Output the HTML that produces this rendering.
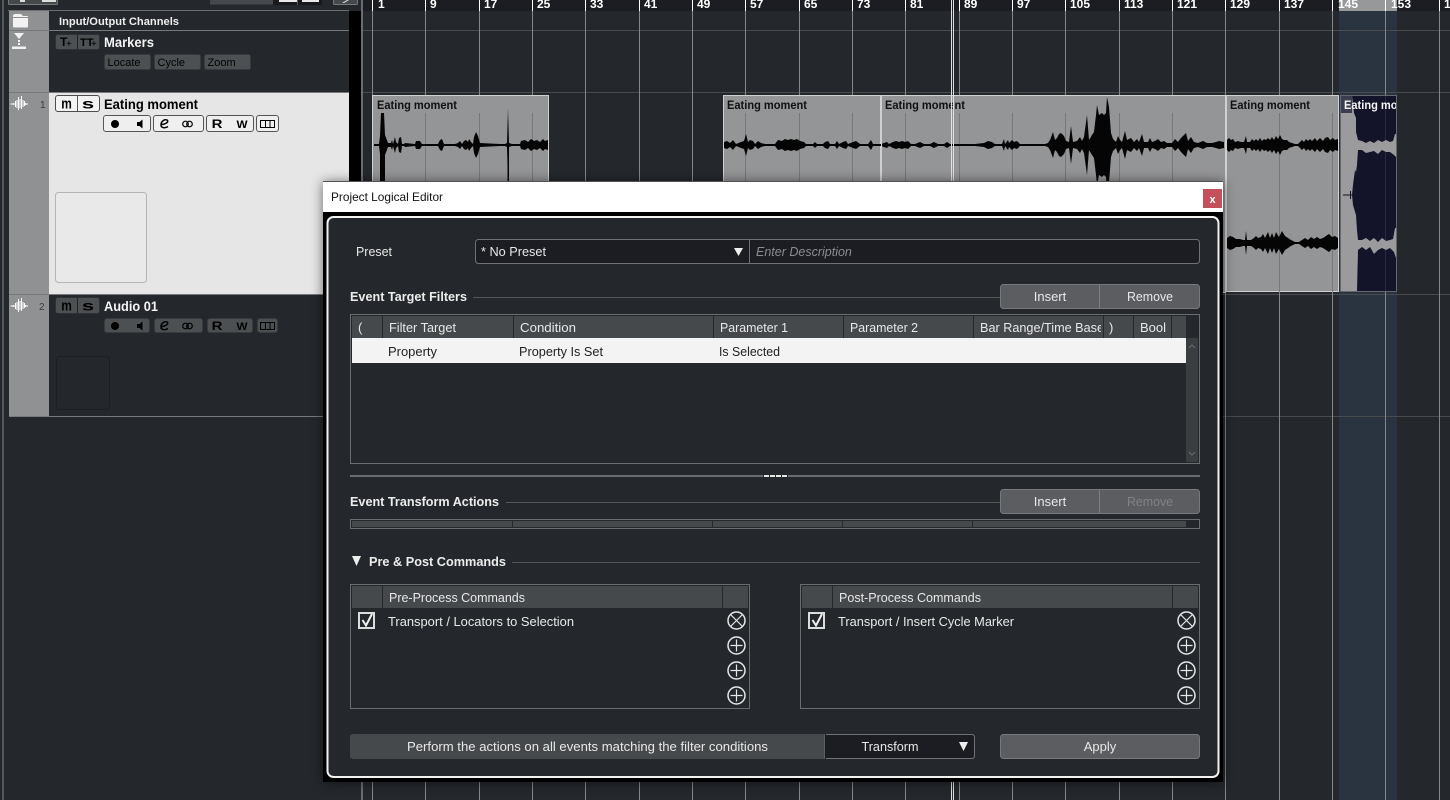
<!DOCTYPE html>
<html><head><meta charset="utf-8"><title>Project Logical Editor</title>
<style>
html,body{margin:0;padding:0;background:#24282c;overflow:hidden}
svg{display:block}
text{font-family:"Liberation Sans",sans-serif;font-size:13px;fill:#e8e8e8;white-space:pre}
.b{font-weight:bold}
.r{font-weight:bold;font-size:12px;fill:#fff}
.h{font-weight:bold;font-size:13px;fill:#ececec}
.c{font-weight:bold;font-size:11.5px;fill:#111}
.tn{font-weight:bold;font-size:14px}
.sm{font-size:11px;fill:#000}
.m{text-anchor:middle}
.ic{font-weight:bold;font-size:12px;text-anchor:middle;fill:#000}
</style></head>
<body>
<svg width="1450" height="800" viewBox="0 0 1450 800" xmlns="http://www.w3.org/2000/svg">
<defs>
<filter id="sh" x="-10%" y="-10%" width="120%" height="120%"><feGaussianBlur stdDeviation="6"/></filter>
<clipPath id="c1"><rect x="373" y="96" width="175" height="195"/></clipPath>
<clipPath id="c2"><rect x="724" y="96" width="157" height="195"/></clipPath>
<clipPath id="c3"><rect x="882" y="96" width="343" height="195"/></clipPath>
<clipPath id="c5"><rect x="1341" y="96" width="55" height="195"/></clipPath>
<clipPath id="th"><rect x="975" y="316" width="126" height="22"/></clipPath>
<path id="w1" d="M374 0V-1L379-1 380-9 381-32 384-32 385-10 388-2 391-2 392-5 393-1 395-8 396-3 398-1 399-7 401-8 402-1 404-1 405-2 415-1 416-4 420-4 422-1 438-1 440-5 442-6 444-1 455-1 458-2 460-4 462-1 464-4 466-5 468-3 469-6 471-3 473-1 474-8 476-13 478-9 480-2 500-1 505-1 507-2 508-37 509-2 512-1 520-1 521-4 525-5 528-3 531-6 534-4 537-5 540-3 543-6 545-4 548-5V0Z"/>
<path id="w2" d="M724 0V-3L727-4 730-2 733-5 736-1 741-3 744-4 746-11 748-3 750-5 753-4 755-1 758-4 761-2 765-1 775-1 778-5 782-4 785-6 788-5 791-6 794-5 797-6 800-4 804-3 806-1 813-1 815-3 817-1 823-1 825-3 828-4 830-1 835-1 837-4 839-1 843-3 846-4 848-1 853-3 856-4 860-1 868-1 871-5 873-1 880-1 881-1 884-2 887-3 889-1 893-3 896-4 899-3 902-4 905-3 908-4 911-1 915-1 920-3 924-1 930-1 934-3 938-1 944-1 947-3 950-1 953-1 955-1 975-1 984-2 988-4 992-3 995-1 1002-1 1004-6 1005-1 1008-5 1009-2 1012-5 1014-3 1017-4 1020-1 1030-1 1045-1 1048-2 1050-5 1053-13 1055-5 1057-7 1059-11 1061-12 1064-9 1066-4 1069-3 1071-19 1073-3 1077-4 1080-8 1082-4 1084-8 1087-30 1089-5 1092-10 1094-13 1096-30 1097-40 1099-30 1102-32 1104-30 1106-32 1107-48 1109-38 1111-12 1113-6 1116-3 1118-9 1120-5 1122-3 1125-14 1127-5 1131-7 1134-3 1137-6 1139-3 1142-11 1144-3 1148-3 1150-7 1152-3 1155-4 1158-6 1161-3 1164-4 1167-2 1172-2 1175-6 1178-3 1181-7 1186-12 1188-4 1191-8 1194-3 1198-2 1203-4 1207-2 1212-2 1216-3 1219-4 1224-3V0Z"/>
<path id="w4" d="M1227 0V-5L1229-7 1231-5 1233-6 1235-3 1238-4 1241-3 1244-3 1246-9 1247-3 1250-3 1252-6 1254-4 1256-6 1258-4 1260-7 1262-4 1264-6 1266-5 1268-7 1270-5 1272-8 1274-5 1276-9 1278-6 1280-10 1282-6 1284-5 1287-5 1289-3 1292-2 1295-1 1298-1 1300-3 1302-5 1304-3 1306-6 1308-4 1310-6 1312-4 1315-7 1317-4 1320-7 1323-4 1325-7 1328-8 1330-5 1333-7 1335-5 1338-6V0Z"/>
<path id="w4b" d="M1227 0V-5L1230-7 1233-6 1236-4 1240-4 1243-3 1245-3 1246-12 1247-3 1251-3 1254-5 1256-7 1258-5 1261-6 1263-9 1265-5 1268-11 1270-5 1272-10 1274-5 1276-11 1279-6 1282-12 1285-7 1288-5 1291-3 1295-1 1299-1 1302-3 1305-5 1308-3 1311-6 1314-4 1317-6 1320-4 1323-5 1326-7 1329-9 1332-6 1335-7 1338-5V0Z"/>
</defs>

<rect width="1450" height="800" fill="#24282c"/>
<rect x="2" y="0" width="2" height="800" fill="#55585b"/>
<rect x="8" y="10" width="341" height="1" fill="#6c6e70"/>
<path d="M8.500 0V3.500Q8.500 4.500 9.500 4.500H56.500Q57.500 4.500 57.500 3.500V0" fill="#46494c" stroke="#77797b"/>
<rect x="20" y="0" width="5" height="2" fill="#ddd"/><rect x="42" y="0" width="14" height="2" fill="#ddd"/>
<path d="M210 0H322V4.500H210Z" fill="#46494c"/>
<rect x="273" y="0" width="49" height="5" fill="#17191c"/>
<rect x="279" y="0" width="18" height="2" fill="#e8e8e8"/><rect x="302" y="0" width="17" height="2" fill="#e8e8e8"/>
<rect x="297" y="0" width="1" height="5" fill="#55585b"/>
<path d="M333.500 0V3.500Q333.500 4.500 334.500 4.500H356.500Q357.500 4.500 357.500 3.500V0" fill="#46494c" stroke="#77797b"/>
<path d="M342 3L347 0H349L344 3Z" fill="#ddd"/>

<rect x="9" y="11" width="40" height="405" fill="#8f9193"/>
<rect x="49" y="11" width="300" height="81" fill="#24282c"/>
<rect x="349" y="11" width="12" height="405" fill="#000"/>
<rect x="9" y="30" width="340" height="1" fill="#77797b"/>
<rect x="9" y="92" width="340" height="1" fill="#77797b"/>
<rect x="49" y="93" width="300" height="201" fill="#e6e6e6"/>
<rect x="9" y="294" width="340" height="1" fill="#77797b"/>
<rect x="49" y="295" width="300" height="121" fill="#24282c"/>
<rect x="9" y="416" width="315" height="1" fill="#77797b"/>
<rect x="349" y="294" width="12" height="123" fill="#000"/>

<path d="M13 16Q13 14 15 14H21L23 16H27Q28 16 28 17V26Q28 27.500 27 27.500H14Q13 27.500 13 26Z" fill="#f2f2f2"/>
<rect x="13" y="17" width="15" height="1" fill="#8f9193"/>
<text x="59" y="25" class="b" style="font-size:11px;fill:#eee" textLength="120" lengthAdjust="spacingAndGlyphs">Input/Output Channels</text>

<path d="M14 33H24L19 39Z" fill="#f2f2f2"/>
<rect x="18" y="40" width="2" height="2" fill="#f2f2f2"/><rect x="18" y="43" width="2" height="2" fill="#f2f2f2"/>
<rect x="12" y="46.500" width="14" height="2.500" fill="#f2f2f2"/>
<rect x="55.500" y="34.500" width="44" height="15" rx="2" fill="#4d5053" stroke="#2f3235"/>
<rect x="77" y="35" width="1" height="14" fill="#222"/>
<text x="60" y="46" style="font-size:12px;font-weight:bold;fill:#000">T</text><text x="66" y="47" style="font-size:10px;fill:#000">+</text>
<text x="80" y="46" style="font-size:11px;font-weight:bold;fill:#000">TT</text><text x="91" y="47" style="font-size:10px;fill:#000">+</text>
<text x="104" y="47" class="tn" style="fill:#f4f4f4" textLength="50" lengthAdjust="spacingAndGlyphs">Markers</text>
<rect x="104.500" y="54.500" width="46" height="15" rx="2" fill="#4d5053" stroke="#373a3d"/>
<rect x="154.500" y="54.500" width="46" height="15" rx="2" fill="#4d5053" stroke="#373a3d"/>
<rect x="204.500" y="54.500" width="46" height="15" rx="2" fill="#4d5053" stroke="#373a3d"/>
<text x="107.500" y="66" class="sm">Locate</text>
<text x="157.500" y="66" class="sm">Cycle</text>
<text x="207.500" y="66" class="sm">Zoom</text>

<path d="M10.500 104H14M14 103V105M15.500 101V107M17 100V108M18.500 97V110M20 99V108M21.500 96V109M23 100V107M24.500 101V106M25.500 103V105M26 104H28" stroke="#fff" stroke-width="1" fill="none"/>
<path d="M10.500 306H14M14 305V307M15.500 303V309M17 302V310M18.500 299V312M20 301V310M21.500 298V311M23 302V309M24.500 303V308M25.500 305V307M26 306H28" stroke="#fff" stroke-width="1" fill="none"/>
<text x="40" y="108" style="font-size:10px;fill:#3a3a3a">1</text>
<text x="39" y="310" style="font-size:10px;fill:#3a3a3a">2</text>

<rect x="55.500" y="95.500" width="44" height="16" rx="2.500" fill="#f3f3f3" stroke="#4a4c4e"/>
<rect x="77" y="96" width="1" height="15" fill="#555"/>
<text class="ic" transform="translate(66.500,108.500) scale(.85,1.050)" style="font-size:14px">m</text>
<text class="ic" transform="translate(88,108.500) scale(1.600,1)" style="font-size:14px">s</text>
<text x="104" y="109" class="tn" style="fill:#000" textLength="94" lengthAdjust="spacingAndGlyphs">Eating moment</text>
<g fill="#efefef" stroke="#555"><rect x="103.500" y="115.500" width="47" height="16" rx="2.500"/><rect x="153.500" y="115.500" width="50" height="16" rx="2.500"/><rect x="206.500" y="115.500" width="47" height="16" rx="2.500"/><rect x="256.500" y="115.500" width="22" height="16" rx="2.500"/></g>
<circle cx="115" cy="124" r="4" fill="#000"/>
<path d="M137 122H139.500L142.500 119.500V128.500L139.500 126H137Z" fill="#000"/>
<path d="M161 124.500C165 124.500 168.500 122.500 167.500 120.500 166 118.500 161 120.500 161 125 161 128 165 128.500 168 126.500" fill="none" stroke="#000" stroke-width="1.500"/>
<circle cx="185.500" cy="124" r="2.800" fill="none" stroke="#000" stroke-width="1.200"/><circle cx="189.500" cy="124" r="2.800" fill="none" stroke="#000" stroke-width="1.200"/>
<text class="ic" transform="translate(217,128) scale(1.150,.9)" style="font-size:13px">R</text>
<text class="ic" transform="translate(242,128) scale(.9,.85)" style="font-size:13px">W</text>
<path d="M260.500 120.500H274.500V127.500H260.500ZM265.500 120.500V127.500M270 120.500V127.500" fill="none" stroke="#000"/>
<rect x="55.500" y="192.500" width="91" height="90" rx="3" fill="#e9e9e9" stroke="#b4b4b4"/>

<rect x="55.500" y="297.500" width="44" height="16" rx="2.500" fill="#4d5053" stroke="#2f3235"/>
<rect x="77" y="298" width="1" height="15" fill="#222"/>
<text class="ic" transform="translate(66.500,310.500) scale(.85,1.050)" style="font-size:14px">m</text>
<text class="ic" transform="translate(88,310.500) scale(1.600,1)" style="font-size:14px">s</text>
<text x="104" y="311" class="tn" style="fill:#f5f5f5" textLength="54" lengthAdjust="spacingAndGlyphs">Audio 01</text>
<g fill="#4d5053" stroke="#383b3e"><rect x="104.500" y="318.500" width="45" height="14" rx="2.500"/><rect x="154.500" y="318.500" width="48" height="14" rx="2.500"/><rect x="207.500" y="318.500" width="45" height="14" rx="2.500"/><rect x="257.500" y="318.500" width="20" height="14" rx="2.500"/></g>
<circle cx="115" cy="326" r="4" fill="#000"/>
<path d="M137 324H139.500L142.500 321.500V330.500L139.500 328H137Z" fill="#000"/>
<path d="M161 326.500C165 326.500 168.500 324.500 167.500 322.500 166 320.500 161 322.500 161 327 161 330 165 330.500 168 328.500" fill="none" stroke="#000" stroke-width="1.500"/>
<circle cx="185.500" cy="326" r="2.800" fill="none" stroke="#000" stroke-width="1.200"/><circle cx="189.500" cy="326" r="2.800" fill="none" stroke="#000" stroke-width="1.200"/>
<text class="ic" transform="translate(217,330) scale(1.150,.9)" style="font-size:13px">R</text>
<text class="ic" transform="translate(242,330) scale(.9,.85)" style="font-size:13px">W</text>
<path d="M260.500 322.500H274.500V329.500H260.500ZM265.500 322.500V329.500M270 322.500V329.500" fill="none" stroke="#000"/>
<rect x="56.500" y="356.500" width="53" height="53" rx="3" fill="#24282c" stroke="#1c1f22"/>

<rect x="361" y="0" width="2" height="800" fill="#6a6d70"/>
<rect x="363" y="0" width="1087" height="11" fill="#1b1d22"/>
<rect x="1339" y="0" width="58" height="11" fill="#97989a"/>
<rect x="1339" y="11" width="58" height="789" fill="#2a3340"/>
<rect x="363" y="30" width="1087" height="1" fill="#474b4e"/>
<rect x="363" y="92" width="1087" height="1" fill="#474b4e"/>
<rect x="363" y="294" width="1087" height="1" fill="#474b4e"/>
<rect x="363" y="416" width="1087" height="1" fill="#474b4e"/>
<g fill="#85888a">
<rect x="372" y="0" width="1" height="800"/><rect x="425" y="0" width="1" height="800"/><rect x="479" y="0" width="1" height="800"/><rect x="532" y="0" width="1" height="800"/><rect x="585" y="0" width="1" height="800"/><rect x="639" y="0" width="1" height="800"/><rect x="692" y="0" width="1" height="800"/><rect x="745" y="0" width="1" height="800"/><rect x="799" y="0" width="1" height="800"/><rect x="852" y="0" width="1" height="800"/><rect x="905" y="0" width="1" height="800"/><rect x="959" y="0" width="1" height="800"/><rect x="1012" y="0" width="1" height="800"/><rect x="1065" y="0" width="1" height="800"/><rect x="1119" y="0" width="1" height="800"/><rect x="1172" y="0" width="1" height="800"/><rect x="1225" y="0" width="1" height="800"/><rect x="1279" y="0" width="1" height="800"/><rect x="1332" y="0" width="1" height="800"/><rect x="1385" y="0" width="1" height="800"/><rect x="1439" y="0" width="1" height="800"/>
</g>
<g fill="#fff">
<rect x="372" y="0" width="1" height="11"/><rect x="425" y="0" width="1" height="11"/><rect x="479" y="0" width="1" height="11"/><rect x="532" y="0" width="1" height="11"/><rect x="585" y="0" width="1" height="11"/><rect x="639" y="0" width="1" height="11"/><rect x="692" y="0" width="1" height="11"/><rect x="745" y="0" width="1" height="11"/><rect x="799" y="0" width="1" height="11"/><rect x="852" y="0" width="1" height="11"/><rect x="905" y="0" width="1" height="11"/><rect x="959" y="0" width="1" height="11"/><rect x="1012" y="0" width="1" height="11"/><rect x="1065" y="0" width="1" height="11"/><rect x="1119" y="0" width="1" height="11"/><rect x="1172" y="0" width="1" height="11"/><rect x="1225" y="0" width="1" height="11"/><rect x="1279" y="0" width="1" height="11"/><rect x="1332" y="0" width="1" height="11"/><rect x="1385" y="0" width="1" height="11"/><rect x="1439" y="0" width="1" height="11"/>
</g>
<g>
<text class="r" x="378" y="8">1</text><text class="r" x="430" y="8">9</text><text class="r" x="484" y="8">17</text><text class="r" x="537" y="8">25</text><text class="r" x="590" y="8">33</text><text class="r" x="644" y="8">41</text><text class="r" x="697" y="8">49</text><text class="r" x="750" y="8">57</text><text class="r" x="804" y="8">65</text><text class="r" x="857" y="8">73</text><text class="r" x="910" y="8">81</text><text class="r" x="964" y="8">89</text><text class="r" x="1017" y="8">97</text><text class="r" x="1070" y="8">105</text><text class="r" x="1124" y="8">113</text><text class="r" x="1177" y="8">121</text><text class="r" x="1230" y="8">129</text><text class="r" x="1284" y="8">137</text><text class="r" x="1338" y="8">145</text><text class="r" x="1391" y="8">153</text><text class="r" x="1444" y="8">161</text>
</g>

<g fill="#949597">
<rect x="372.500" y="95.500" width="176" height="197" stroke="#d0d0d0"/>
<rect x="723.500" y="95.500" width="157" height="197" stroke="#d0d0d0"/>
<rect x="881.500" y="95.500" width="344" height="197" stroke="#d0d0d0"/>
<rect x="1226.500" y="95.500" width="112" height="196" stroke="#d0d0d0"/>
</g>
<g fill="#76787a">
<rect x="425" y="113" width="1" height="179"/><rect x="479" y="113" width="1" height="179"/><rect x="532" y="113" width="1" height="179"/>
<rect x="745" y="113" width="1" height="179"/><rect x="799" y="113" width="1" height="179"/><rect x="852" y="113" width="1" height="179"/>
<rect x="905" y="113" width="1" height="179"/><rect x="959" y="113" width="1" height="179"/><rect x="1012" y="113" width="1" height="179"/><rect x="1065" y="113" width="1" height="179"/><rect x="1119" y="113" width="1" height="179"/><rect x="1172" y="113" width="1" height="179"/>
<rect x="1279" y="113" width="1" height="179"/><rect x="1332" y="113" width="1" height="179"/>
</g>
<g fill="#050505">
<g transform="translate(0,145)"><use href="#w1"/><use href="#w1" transform="scale(1,-1)"/><rect x="380" y="0" width="5" height="50"/><rect x="507.500" y="0" width="1.500" height="50"/></g>
<g clip-path="url(#c2)"><g transform="translate(0,145)"><use href="#w2"/><use href="#w2" transform="scale(1,-1)"/></g></g>
<g clip-path="url(#c3)"><g transform="translate(0,145)"><use href="#w2"/><use href="#w2" transform="scale(1,-1)"/></g></g>
<g transform="translate(0,145)"><use href="#w4"/><use href="#w4" transform="scale(1,-1)"/></g>
<g transform="translate(0,243)"><use href="#w4b"/><use href="#w4b" transform="scale(1,-1)"/></g>
</g>
<text x="377" y="109" class="c" textLength="80" lengthAdjust="spacingAndGlyphs">Eating moment</text>
<text x="727" y="109" class="c" textLength="80" lengthAdjust="spacingAndGlyphs">Eating moment</text>
<text x="885" y="109" class="c" textLength="80" lengthAdjust="spacingAndGlyphs">Eating moment</text>
<text x="1230" y="109" class="c" textLength="80" lengthAdjust="spacingAndGlyphs">Eating moment</text>

<rect x="1340.500" y="95.500" width="56" height="196" fill="#13132a" stroke="#65676a"/>
<rect x="1385" y="96" width="1" height="195" fill="#2a2a45"/>
<path d="M1341 96H1352L1354 113 1356 118 1356 132 1358 140 1362 141 1366 143 1370 141 1374 143 1378 140 1382 142 1386 140 1390 142 1393 141 1395 134 1396 134V157L1394 155 1390 152 1386 152 1382 150 1378 154 1374 151 1370 152 1366 153 1362 150 1358 150 1357 165 1356 172 1355 170 1353 185 1352 195 1353 205 1356 215 1357 230 1358 240 1362 240 1366 238 1370 241 1374 238 1378 242 1382 238 1386 241 1390 240 1393 239 1395 228 1396 228V258L1394 252 1390 248 1386 250 1382 248 1378 250 1374 254 1370 247 1366 250 1362 247 1358 250 1357 291H1341Z" fill="#9b9b9d"/>
<rect x="1343" y="194.500" width="9" height="1" fill="#13132a"/>
<rect x="1350" y="191" width="1" height="8" fill="#13132a"/>
<rect x="1341" y="96" width="11" height="17" fill="#3c3d50"/>
<g clip-path="url(#c5)"><text x="1344" y="109" class="b" style="font-size:11.5px;fill:#f4f4f4" textLength="80" lengthAdjust="spacingAndGlyphs">Eating moment</text></g>

<rect x="951" y="0" width="1" height="800" fill="#e0e0e0"/><rect x="953" y="0" width="1" height="800" fill="#e0e0e0"/>

<rect x="323" y="182" width="900" height="600" fill="#000" opacity=".55" filter="url(#sh)"/>
<rect x="323" y="182" width="900" height="600" fill="#000"/>
<rect x="323" y="182" width="900" height="30" fill="#fff"/>
<rect x="323" y="181" width="900" height="1" fill="#555"/>
<text x="331" y="201" style="font-size:12px;fill:#111" textLength="112" lengthAdjust="spacingAndGlyphs">Project Logical Editor</text>
<rect x="1203" y="189" width="19" height="19" fill="#c4505a"/>
<text x="1212.500" y="203" class="m b" style="font-size:11px;fill:#fff">x</text>
<rect x="327.500" y="217" width="891" height="560" rx="6" fill="#24282c" stroke="#f2f2f2" stroke-width="2"/>

<text x="356" y="256" textLength="36" lengthAdjust="spacingAndGlyphs">Preset</text>
<rect x="475.500" y="239.500" width="724" height="24" rx="3" fill="#1b1d22" stroke="#6f7275"/>
<rect x="749" y="240" width="1" height="23" fill="#6f7275"/>
<text x="481" y="256" textLength="65" lengthAdjust="spacingAndGlyphs">* No Preset</text>
<path d="M734 248H743L738.500 256Z" fill="#eee"/>
<text x="756" y="256" style="font-style:italic;fill:#8a8d90;font-size:12.5px">Enter Description</text>

<text x="350" y="301" class="h" textLength="117" lengthAdjust="spacingAndGlyphs">Event Target Filters</text>
<rect x="473" y="297" width="527" height="1" fill="#55585b"/>
<rect x="1000.500" y="284.500" width="199" height="24" rx="3" fill="#5b5d61" stroke="#77797c"/>
<rect x="1099" y="285" width="1" height="23" fill="#7c7e81"/>
<text x="1050" y="301" class="m">Insert</text>
<text x="1150" y="301" class="m" textLength="46" lengthAdjust="spacingAndGlyphs">Remove</text>

<rect x="350.500" y="314.500" width="849" height="149" fill="#24282c" stroke="#6a6d70"/>
<rect x="352" y="316" width="834" height="22" fill="#46494c"/>
<g fill="#24282c"><rect x="382" y="316" width="1" height="22"/><rect x="513" y="316" width="1" height="22"/><rect x="713" y="316" width="1" height="22"/><rect x="843" y="316" width="1" height="22"/><rect x="973" y="316" width="1" height="22"/><rect x="1103" y="316" width="1" height="22"/><rect x="1133" y="316" width="1" height="22"/><rect x="1171" y="316" width="1" height="22"/></g>
<text x="358" y="332">(</text>
<text x="389" y="332" textLength="67" lengthAdjust="spacingAndGlyphs">Filter Target</text>
<text x="520" y="332" textLength="56" lengthAdjust="spacingAndGlyphs">Condition</text>
<text x="720" y="332" textLength="68" lengthAdjust="spacingAndGlyphs">Parameter 1</text>
<text x="850" y="332" textLength="68" lengthAdjust="spacingAndGlyphs">Parameter 2</text>
<g clip-path="url(#th)"><text x="980" y="332" textLength="124" lengthAdjust="spacingAndGlyphs">Bar Range/Time Base</text></g>
<text x="1109" y="332">)</text>
<text x="1140" y="332">Bool</text>
<rect x="352" y="338" width="834" height="25" fill="#f3f3f3"/>
<text x="388" y="356" style="fill:#222" textLength="49" lengthAdjust="spacingAndGlyphs">Property</text>
<text x="519" y="356" style="fill:#222" textLength="84" lengthAdjust="spacingAndGlyphs">Property Is Set</text>
<text x="719" y="356" style="fill:#222" textLength="61" lengthAdjust="spacingAndGlyphs">Is Selected</text>
<rect x="1186" y="338" width="12" height="124" rx="2" fill="#3b3e41"/>
<path d="M1189 348L1192 345 1195 348M1189 452L1192 455 1195 452" fill="none" stroke="#666a6d"/>

<rect x="350" y="475" width="850" height="2" fill="#6a6d70"/>
<rect x="763" y="475" width="25" height="2" fill="#24282c"/>
<g fill="#e6e6e6"><rect x="764" y="475" width="5" height="2"/><rect x="770" y="475" width="5" height="2"/><rect x="776" y="475" width="5" height="2"/><rect x="782" y="475" width="5" height="2"/></g>

<text x="350" y="506" class="h" textLength="149" lengthAdjust="spacingAndGlyphs">Event Transform Actions</text>
<rect x="506" y="502" width="494" height="1" fill="#55585b"/>
<rect x="1000.500" y="489.500" width="199" height="24" rx="3" fill="#5b5d61" stroke="#77797c"/>
<rect x="1099" y="490" width="1" height="23" fill="#7c7e81"/>
<text x="1050" y="506" class="m">Insert</text>
<text x="1150" y="506" class="m" style="fill:#808285" textLength="46" lengthAdjust="spacingAndGlyphs">Remove</text>
<rect x="350.500" y="519.500" width="849" height="9" fill="#24282c" stroke="#6a6d70"/>
<rect x="352" y="521" width="834" height="6" fill="#46494c"/>
<g fill="#24282c"><rect x="512" y="521" width="1" height="6"/><rect x="712" y="521" width="1" height="6"/><rect x="842" y="521" width="1" height="6"/><rect x="972" y="521" width="1" height="6"/></g>

<path d="M352 556H361L356.500 566Z" fill="#eee"/>
<text x="369" y="566" class="h" textLength="137" lengthAdjust="spacingAndGlyphs">Pre &amp; Post Commands</text>
<rect x="512" y="562" width="688" height="1" fill="#55585b"/>

<rect x="350.500" y="584.500" width="399" height="124" fill="#24282c" stroke="#6a6d70"/>
<rect x="352" y="586" width="396" height="22" fill="#46494c"/>
<rect x="382" y="586" width="1" height="22" fill="#24282c"/><rect x="722" y="586" width="1" height="22" fill="#24282c"/>
<text x="389" y="602" textLength="136" lengthAdjust="spacingAndGlyphs">Pre-Process Commands</text>
<rect x="359" y="613" width="15" height="15" fill="none" stroke="#dcdcdc" stroke-width="2"/>
<path d="M362.500 620L366 625.500 372 614" fill="none" stroke="#f0f0f0" stroke-width="2"/>
<text x="388" y="626" textLength="186" lengthAdjust="spacingAndGlyphs">Transport / Locators to Selection</text>
<g fill="none" stroke="#e6e6e6" stroke-width="1.500">
<circle cx="736.500" cy="620.500" r="8.500"/><path d="M730.500 614.500L742.500 626.500M742.500 614.500L730.500 626.500" stroke-width="1.200"/>
<circle cx="736.500" cy="645.500" r="8.500"/><path d="M730.500 645.500H742.500M736.500 639.500V651.500" stroke-width="1.200"/>
<circle cx="736.500" cy="670.500" r="8.500"/><path d="M730.500 670.500H742.500M736.500 664.500V676.500" stroke-width="1.200"/>
<circle cx="736.500" cy="695.500" r="8.500"/><path d="M730.500 695.500H742.500M736.500 689.500V701.500" stroke-width="1.200"/>
</g>

<rect x="800.500" y="584.500" width="399" height="124" fill="#24282c" stroke="#6a6d70"/>
<rect x="802" y="586" width="396" height="22" fill="#46494c"/>
<rect x="832" y="586" width="1" height="22" fill="#24282c"/><rect x="1172" y="586" width="1" height="22" fill="#24282c"/>
<text x="839" y="602" textLength="142" lengthAdjust="spacingAndGlyphs">Post-Process Commands</text>
<rect x="809" y="613" width="15" height="15" fill="none" stroke="#dcdcdc" stroke-width="2"/>
<path d="M812.500 620L816 625.500 822 614" fill="none" stroke="#f0f0f0" stroke-width="2"/>
<text x="838" y="626" textLength="176" lengthAdjust="spacingAndGlyphs">Transport / Insert Cycle Marker</text>
<g fill="none" stroke="#e6e6e6" stroke-width="1.500">
<circle cx="1186.500" cy="620.500" r="8.500"/><path d="M1180.500 614.500L1192.500 626.500M1192.500 614.500L1180.500 626.500" stroke-width="1.200"/>
<circle cx="1186.500" cy="645.500" r="8.500"/><path d="M1180.500 645.500H1192.500M1186.500 639.500V651.500" stroke-width="1.200"/>
<circle cx="1186.500" cy="670.500" r="8.500"/><path d="M1180.500 670.500H1192.500M1186.500 664.500V676.500" stroke-width="1.200"/>
<circle cx="1186.500" cy="695.500" r="8.500"/><path d="M1180.500 695.500H1192.500M1186.500 689.500V701.500" stroke-width="1.200"/>
</g>

<rect x="350" y="734" width="480" height="25" rx="3" fill="#46494c"/>
<text x="587.500" y="751" class="m" textLength="361" lengthAdjust="spacingAndGlyphs">Perform the actions on all events matching the filter conditions</text>
<path d="M825 734.500H971.500Q974.500 734.500 974.500 737.500V755.500Q974.500 758.500 971.500 758.500H825Z" fill="#1b1d22" stroke="#6f7275"/>
<rect x="825" y="734" width="1" height="25" fill="#1b1d22"/>
<text x="890" y="751" class="m" textLength="57" lengthAdjust="spacingAndGlyphs">Transform</text>
<path d="M959 742H968L963.500 751Z" fill="#eee"/>
<rect x="1000.500" y="734.500" width="199" height="24" rx="3" fill="#5b5d61" stroke="#77797c"/>
<text x="1100" y="751" class="m">Apply</text>
</svg>
</body></html>
